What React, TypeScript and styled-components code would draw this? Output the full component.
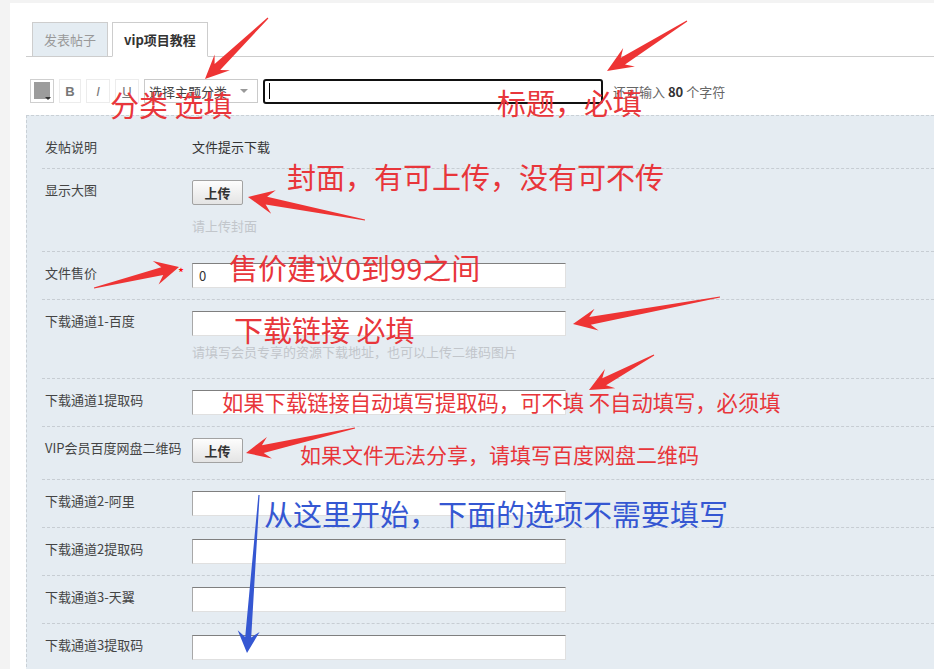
import React from 'react';
import styled, { createGlobalStyle } from 'styled-components';

const GlobalStyle = createGlobalStyle`
  html, body { margin: 0; padding: 0; background: #f3f3f3; }
  body {
    font-family: "Noto Sans CJK SC", "Microsoft YaHei", sans-serif;
    font-size: 13px;
    color: #333;
  }
  * { box-sizing: border-box; }
`;

const Page = styled.div`
  position: relative;
  width: 934px;
  height: 669px;
  overflow: hidden;
`;

const Panel = styled.div`
  display: flex;
  flex-direction: column;
  margin: 3px 0 0 10px;
  height: 666px;
  padding-left: 16px;
  background: #fff;
`;

const TabBar = styled.div`
  display: flex;
  gap: 4px;
  padding: 19px 0 0 6px;
  border-bottom: 1px solid #cdcdcd;
`;

const Tab = styled.div<{ $active?: boolean }>`
  height: 35px;
  margin-bottom: -1px;
  padding: 0 11px;
  line-height: 33px;
  border: 1px solid #cdcdcd;
  border-bottom-color: ${p => (p.$active ? '#fff' : '#cdcdcd')};
  background: ${p => (p.$active ? '#fff' : '#e4ecf2')};
  color: ${p => (p.$active ? '#333' : '#999')};
  font-weight: ${p => (p.$active ? 700 : 400)};
  white-space: nowrap;
`;

const Toolbar = styled.div`
  display: flex;
  align-items: center;
  gap: 5px;
  height: 24px;
  margin-top: 22px;
  padding-left: 4px;
`;

const ColorButton = styled.div`
  position: relative;
  width: 24px;
  height: 24px;
  padding: 2px 3px 3px 3px;
  border: 1px solid #cfcfcf;
  background: #fff;
`;

const Swatch = styled.div`
  width: 100%;
  height: 100%;
  background: #9c9c9c;
`;

const SwatchCaret = styled.span`
  position: absolute;
  right: 2px;
  bottom: 2px;
  width: 0;
  height: 0;
  border-left: 3px solid transparent;
  border-right: 3px solid transparent;
  border-top: 3px solid #333;
`;

const FormatButton = styled.div<{ $w: number; $italic?: boolean; $under?: boolean; $bold?: boolean }>`
  display: flex;
  align-items: center;
  justify-content: center;
  width: ${p => p.$w}px;
  height: 24px;
  border: 1px solid #ececec;
  background: #fff;
  color: #777;
  font-family: "Liberation Sans", Arial, sans-serif;
  font-size: 13px;
  font-weight: ${p => (p.$bold ? 700 : 400)};
  font-style: ${p => (p.$italic ? 'italic' : 'normal')};
  text-decoration: ${p => (p.$under ? 'underline' : 'none')};
`;

const Select = styled.div`
  display: flex;
  align-items: center;
  justify-content: space-between;
  width: 114px;
  height: 24px;
  padding-left: 4px;
  border: 1px solid #cacaca;
  background: #fff;
  color: #444;
`;

const SelectCaret = styled.span`
  width: 0;
  height: 0;
  margin-right: 9px;
  border-left: 4px solid transparent;
  border-right: 4px solid transparent;
  border-top: 4px solid #999;
`;

const TitleBox = styled.div`
  display: flex;
  align-items: center;
  width: 340px;
  height: 25px;
  padding-left: 4px;
  border: 2px solid #111;
  border-radius: 3px;
  background: #fff;
`;

const Caret = styled.span`
  width: 1px;
  height: 16px;
  background: #000;
`;

const Counter = styled.span`
  margin-left: 5px;
  color: #666;
  white-space: nowrap;
  strong { color: #333; font-weight: 700; }
`;

const Form = styled.div`
  flex: 1;
  margin-top: 12px;
  padding-top: 10px;
  background: #e5ecf2;
  border-top: 1px dashed #c9d0d6;
  border-left: 1px dashed #c9d0d6;
`;

const Row = styled.div<{ $pb?: number }>`
  display: grid;
  grid-template-columns: 150px 1fr;
  margin-left: 15px;
  padding: 11px 0 ${p => p.$pb ?? 11}px;
  border-bottom: 1px dashed #c7cdd3;
`;

const Label = styled.div`
  display: flex;
  line-height: 20px;
  padding-left: 3px;
  color: #444;
  white-space: nowrap;
`;

const Required = styled.span`
  margin-left: auto;
  margin-right: 8px;
  color: #f00;
`;

const Field = styled.div`
  display: flex;
  flex-direction: column;
  align-items: flex-start;
`;

const ValueText = styled.div`
  line-height: 20px;
  color: #333;
`;

const TextInput = styled.input`
  width: 374px;
  height: 25px;
  margin: 0;
  padding: 0 6px;
  border: 1px solid #e0e0e0;
  border-top-color: #7f7f7f;
  border-left-color: #a8a8a8;
  background: #fff;
  color: #333;
  font-family: inherit;
  font-size: 13px;
  outline: none;
`;

const UploadButton = styled.button`
  width: 51px;
  height: 25px;
  margin: 0;
  padding: 0;
  border: 1px solid #a2a2a2;
  border-radius: 2px;
  background: linear-gradient(#fdfdfd, #e4e4e4);
  color: #333;
  font-family: inherit;
  font-size: 13px;
  font-weight: 700;
`;

const Hint = styled.div<{ $mt: number }>`
  margin-top: ${p => p.$mt}px;
  line-height: 20px;
  color: #c2c6cb;
  white-space: nowrap;
`;

const Overlay = styled.div`
  position: absolute;
  inset: 0;
  pointer-events: none;
`;

const ArrowLayer = styled.svg`
  position: absolute;
  left: 0;
  top: 0;
`;

const Note = styled.span<{ $x: number; $y: number; $size: number; $color: string }>`
  position: absolute;
  left: ${p => p.$x}px;
  top: ${p => p.$y - p.$size * 0.55}px;
  font-family: "Noto Sans CJK SC", "Microsoft YaHei", sans-serif;
  font-size: ${p => p.$size}px;
  line-height: 1;
  color: ${p => p.$color};
  white-space: pre;
`;

type ArrowSpec = {
  from: [number, number];
  to: [number, number];
  head: number;
  half: number;
  shaft: number;
  color: string;
};

const arrowPoints = ({ from, to, head, half, shaft }: ArrowSpec) => {
  const [x1, y1] = from;
  const [x2, y2] = to;
  const len = Math.hypot(x2 - x1, y2 - y1);
  const ux = (x2 - x1) / len;
  const uy = (y2 - y1) / len;
  const nx = -uy;
  const ny = ux;
  const neckX = x2 - ux * head * 0.72;
  const neckY = y2 - uy * head * 0.72;
  const baseX = x2 - ux * head;
  const baseY = y2 - uy * head;
  const pts: [number, number][] = [
    [x1 + nx * 0.6, y1 + ny * 0.6],
    [neckX + nx * shaft, neckY + ny * shaft],
    [baseX + nx * half, baseY + ny * half],
    [x2, y2],
    [baseX - nx * half, baseY - ny * half],
    [neckX - nx * shaft, neckY - ny * shaft],
    [x1 - nx * 0.6, y1 - ny * 0.6],
  ];
  return pts.map(p => `${p[0].toFixed(1)},${p[1].toFixed(1)}`).join(' ');
};

const RED = '#ee3434';
const RED_TEXT = '#e8363b';
const BLUE = '#3557d2';

const arrows: ArrowSpec[] = [
  { from: [268, 18], to: [205, 79], head: 24, half: 11, shaft: 4, color: RED },
  { from: [687, 21], to: [607, 71], head: 26, half: 11, shaft: 4, color: RED },
  { from: [365, 220], to: [248, 197], head: 26, half: 12, shaft: 4, color: RED },
  { from: [94, 288], to: [179, 267], head: 24, half: 12, shaft: 4, color: RED },
  { from: [720, 297], to: [573, 324], head: 24, half: 11, shaft: 4, color: RED },
  { from: [654, 355], to: [589, 390], head: 24, half: 11, shaft: 4, color: RED },
  { from: [355, 428], to: [246, 453], head: 24, half: 11, shaft: 4, color: RED },
  { from: [259, 495], to: [247, 653], head: 22, half: 11, shaft: 3, color: BLUE },
];

const notes = [
  { x: 110, y: 106, size: 29, color: RED_TEXT, text: '分类 选填' },
  { x: 497, y: 104, size: 29, color: RED_TEXT, text: '标题，必填' },
  { x: 287, y: 178, size: 29, color: RED_TEXT, text: '封面，有可上传，没有可不传' },
  { x: 229, y: 269, size: 29, color: RED_TEXT, text: '售价建议0到99之间' },
  { x: 234, y: 331, size: 29, color: RED_TEXT, text: '下载链接 必填' },
  { x: 222, y: 403, size: 21.3, color: RED_TEXT, text: '如果下载链接自动填写提取码，可不填 不自动填写，必须填' },
  { x: 300, y: 456, size: 21, color: RED_TEXT, text: '如果文件无法分享，请填写百度网盘二维码' },
  { x: 264, y: 515, size: 29, color: BLUE, text: '从这里开始，下面的选项不需要填写' },
];

const plainChannels = ['下载通道2-阿里', '下载通道2提取码', '下载通道3-天翼', '下载通道3提取码'];

export default function App() {
  return (
    <Page>
      <GlobalStyle />
      <Panel>
        <TabBar>
          <Tab>发表帖子</Tab>
          <Tab $active>vip项目教程</Tab>
        </TabBar>

        <Toolbar>
          <ColorButton>
            <Swatch />
            <SwatchCaret />
          </ColorButton>
          <FormatButton $w={22} $bold>B</FormatButton>
          <FormatButton $w={24} $italic>I</FormatButton>
          <FormatButton $w={24} $under>U</FormatButton>
          <Select>
            <span>选择主题分类</span>
            <SelectCaret />
          </Select>
          <TitleBox>
            <Caret />
          </TitleBox>
          <Counter>
            还可输入 <strong>80</strong> 个字符
          </Counter>
        </Toolbar>

        <Form>
          <Row>
            <Label>发帖说明</Label>
            <Field>
              <ValueText>文件提示下载</ValueText>
            </Field>
          </Row>
          <Row $pb={15}>
            <Label>显示大图</Label>
            <Field>
              <UploadButton>上传</UploadButton>
              <Hint $mt={11}>请上传封面</Hint>
            </Field>
          </Row>
          <Row>
            <Label>
              文件售价<Required>*</Required>
            </Label>
            <Field>
              <TextInput defaultValue="0" />
            </Field>
          </Row>
          <Row $pb={16}>
            <Label>下载通道1-百度</Label>
            <Field>
              <TextInput />
              <Hint $mt={6}>请填写会员专享的资源下载地址，也可以上传二维码图片</Hint>
            </Field>
          </Row>
          <Row>
            <Label>下载通道1提取码</Label>
            <Field>
              <TextInput />
            </Field>
          </Row>
          <Row $pb={16}>
            <Label>VIP会员百度网盘二维码</Label>
            <Field>
              <UploadButton>上传</UploadButton>
            </Field>
          </Row>
          {plainChannels.map(name => (
            <Row key={name}>
              <Label>{name}</Label>
              <Field>
                <TextInput />
              </Field>
            </Row>
          ))}
        </Form>
      </Panel>

      <Overlay>
        <ArrowLayer width={934} height={669} viewBox="0 0 934 669">
          {arrows.map((a, i) => (
            <polygon key={i} points={arrowPoints(a)} fill={a.color} />
          ))}
        </ArrowLayer>
        {notes.map(n => (
          <Note key={n.text} $x={n.x} $y={n.y} $size={n.size} $color={n.color}>
            {n.text}
          </Note>
        ))}
      </Overlay>
    </Page>
  );
}
